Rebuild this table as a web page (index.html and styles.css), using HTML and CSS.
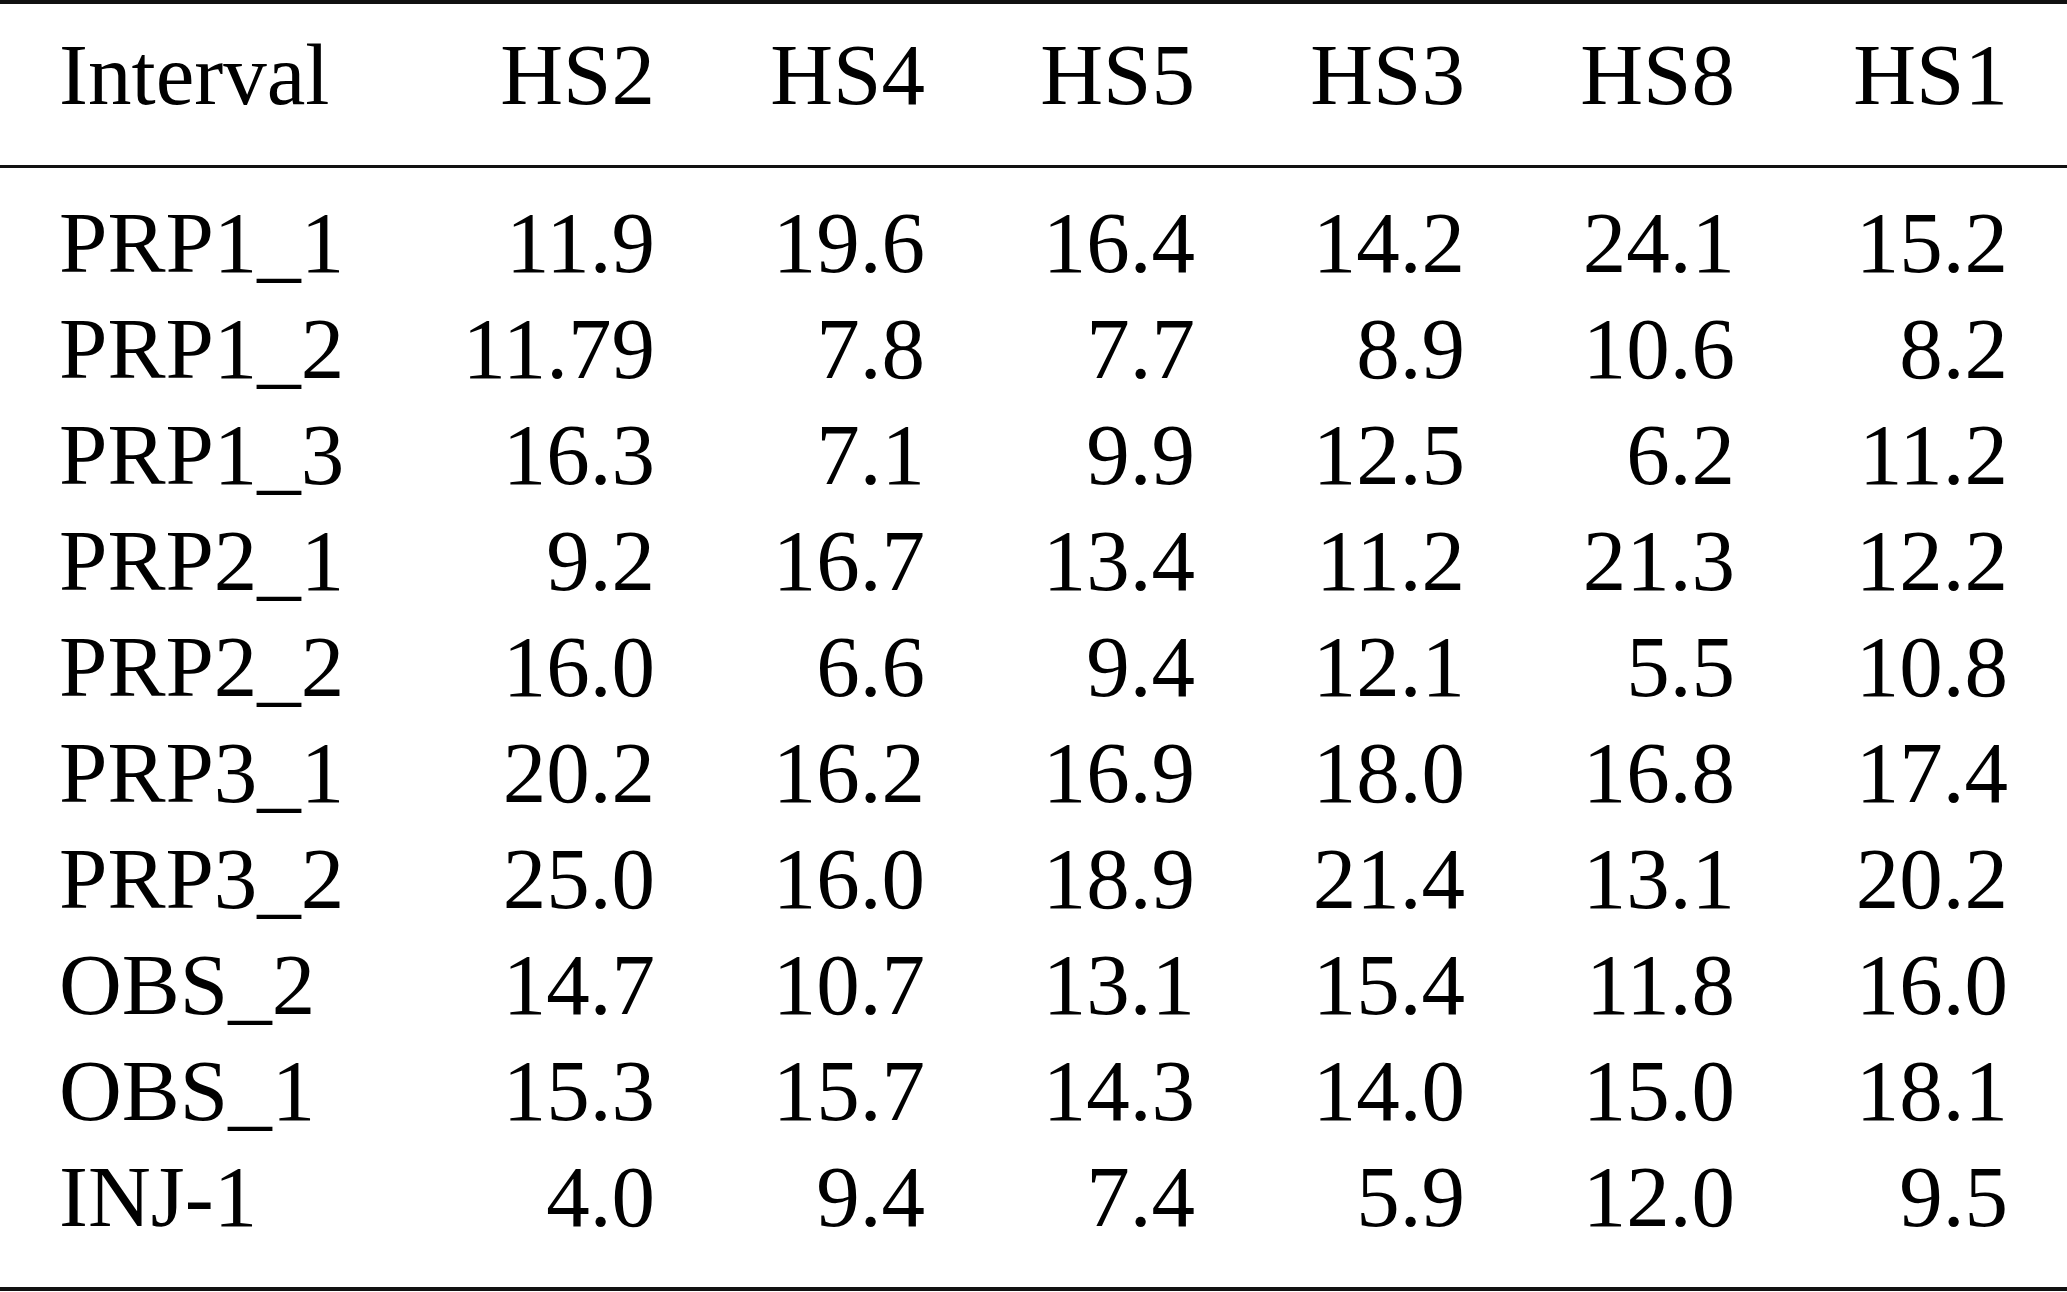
FILE: index.html
```html
<!DOCTYPE html>
<html lang="en">
<head>
    <meta charset="UTF-8">
    <meta name="viewport" content="width=device-width, initial-scale=1.0">
    <title>Interval table</title>
    <link rel="stylesheet" href="styles.css">
</head>
<body>
    <table class="results">
        <colgroup>
            <col class="col-label">
            <col class="col-num">
            <col class="col-num">
            <col class="col-num">
            <col class="col-num">
            <col class="col-num">
            <col class="col-last">
        </colgroup>
        <thead>
            <tr>
                <th class="label">Interval</th>
                <th>HS2</th>
                <th>HS4</th>
                <th>HS5</th>
                <th>HS3</th>
                <th>HS8</th>
                <th class="last">HS1</th>
            </tr>
        </thead>
        <tbody>
            <tr class="first">
                <td class="label">PRP1_1</td>
                <td>11.9</td><td>19.6</td><td>16.4</td><td>14.2</td><td>24.1</td><td class="last">15.2</td>
            </tr>
            <tr>
                <td class="label">PRP1_2</td>
                <td>11.79</td><td>7.8</td><td>7.7</td><td>8.9</td><td>10.6</td><td class="last">8.2</td>
            </tr>
            <tr>
                <td class="label">PRP1_3</td>
                <td>16.3</td><td>7.1</td><td>9.9</td><td>12.5</td><td>6.2</td><td class="last">11.2</td>
            </tr>
            <tr>
                <td class="label">PRP2_1</td>
                <td>9.2</td><td>16.7</td><td>13.4</td><td>11.2</td><td>21.3</td><td class="last">12.2</td>
            </tr>
            <tr>
                <td class="label">PRP2_2</td>
                <td>16.0</td><td>6.6</td><td>9.4</td><td>12.1</td><td>5.5</td><td class="last">10.8</td>
            </tr>
            <tr>
                <td class="label">PRP3_1</td>
                <td>20.2</td><td>16.2</td><td>16.9</td><td>18.0</td><td>16.8</td><td class="last">17.4</td>
            </tr>
            <tr>
                <td class="label">PRP3_2</td>
                <td>25.0</td><td>16.0</td><td>18.9</td><td>21.4</td><td>13.1</td><td class="last">20.2</td>
            </tr>
            <tr>
                <td class="label">OBS_2</td>
                <td>14.7</td><td>10.7</td><td>13.1</td><td>15.4</td><td>11.8</td><td class="last">16.0</td>
            </tr>
            <tr>
                <td class="label">OBS_1</td>
                <td>15.3</td><td>15.7</td><td>14.3</td><td>14.0</td><td>15.0</td><td class="last">18.1</td>
            </tr>
            <tr class="end">
                <td class="label">INJ-1</td>
                <td>4.0</td><td>9.4</td><td>7.4</td><td>5.9</td><td>12.0</td><td class="last">9.5</td>
            </tr>
        </tbody>
    </table>
</body>
</html>
```

FILE: styles.css
```css
body {
    margin: 0;
    padding: 0;
    background-color: #fff;
    font-family: "Liberation Serif", "Times New Roman", serif;
    color: #000;
}

.results {
    width: 2067px;
    border-collapse: collapse;
    table-layout: fixed;
    font-size: 87px;
    line-height: 106px;
}

.col-label {
    width: 385px;
}

.col-num {
    width: 270px;
}

.col-last {
    width: 332px;
}

.results th,
.results td {
    padding: 0;
    text-align: right;
    font-weight: normal;
    white-space: nowrap;
}

.results .label {
    text-align: left;
    padding-left: 59px;
}

.results .last {
    padding-right: 59px;
}

.results thead tr {
    border-top: 4px solid #111;
    border-bottom: 3px solid #111;
}

.results thead th {
    padding-top: 18px;
    padding-bottom: 37px;
}

.results tr.first td {
    padding-top: 22px;
}

.results tr.end {
    border-bottom: 4px solid #111;
}

.results tr.end td {
    padding-bottom: 37px;
}
```
